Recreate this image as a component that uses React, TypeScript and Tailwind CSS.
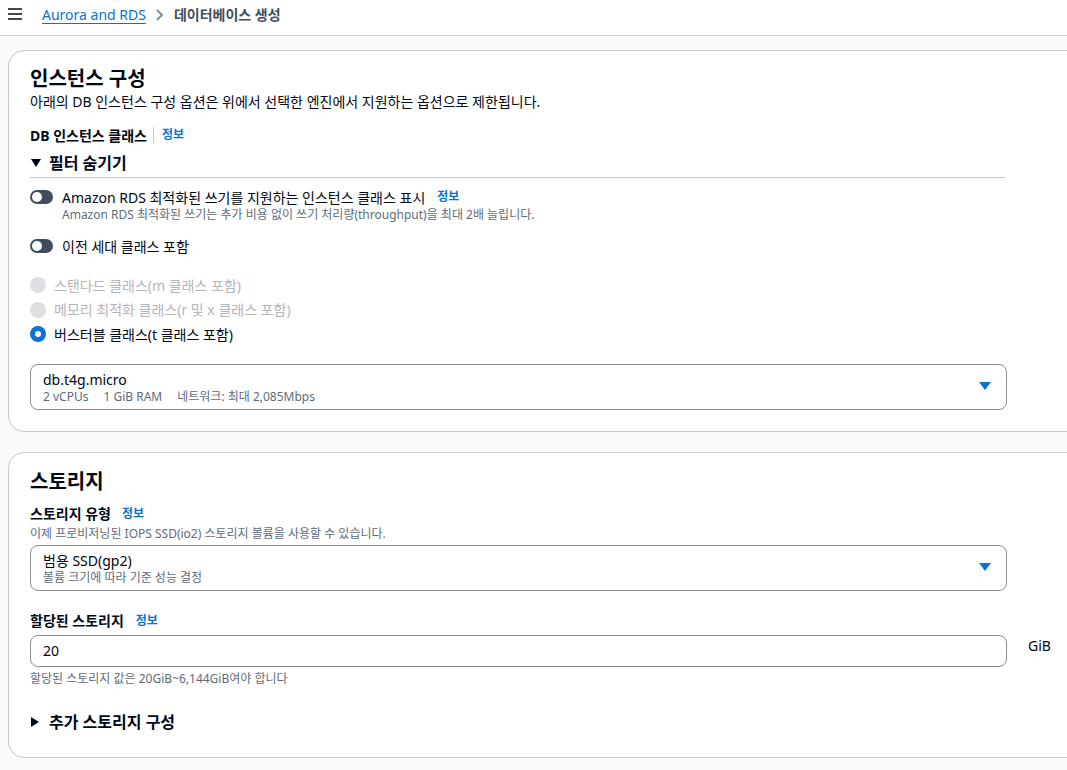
import React from "react";

const font = { fontFamily: '"Noto Sans", "Noto Sans CJK KR", sans-serif' };

const Info = ({ className = "" }: { className?: string }) => (
  <span className={"text-[12px] font-bold text-[#0972d3] " + className}>정보</span>
);

const Toggle = () => (
  <div className="w-[23px] h-[14px] rounded-full bg-[#414d5c] flex items-center px-[2px] shrink-0">
    <div className="w-[10px] h-[10px] rounded-full bg-white"></div>
  </div>
);

const Radio = ({ label, checked, disabled }: { label: string; checked?: boolean; disabled?: boolean }) => (
  <div className="flex items-center gap-[8px] h-[24.5px]">
    {checked ? (
      <div className="w-[16px] h-[16px] rounded-full bg-[#0972d3] flex items-center justify-center shrink-0">
        <div className="w-[6px] h-[6px] rounded-full bg-white"></div>
      </div>
    ) : (
      <div className="w-[16px] h-[16px] rounded-full bg-[#dedee3] shrink-0"></div>
    )}
    <span className={"text-[14px] " + (disabled ? "text-[#b4b4bb]" : "text-[#000716]")}>{label}</span>
  </div>
);

const Caret = () => (
  <svg width="12" height="9" viewBox="0 0 12 9" className="shrink-0">
    <path d="M0 0 H12 L6 8 Z" fill="#0972d3" />
  </svg>
);

const SelectBox = ({ title, sub }: { title: string; sub: React.ReactNode }) => (
  <div className="w-[977px] h-[46px] rounded-[8px] border border-[#8c8c94] bg-white flex items-center justify-between pl-[12px] pr-[15px]">
    <div className="flex flex-col leading-none mt-[3px]">
      <span className="text-[14px] text-[#000716] leading-[18px]">{title}</span>
      <span className="text-[12px] text-[#5f6b7a] leading-[16px]">{sub}</span>
    </div>
    <Caret />
  </div>
);

export default function App() {
  return (
    <div className="min-h-[770px] bg-[#fafafa] overflow-hidden text-[#000716]" style={font}>
      <div className="h-[36px] bg-white border-b border-[#c6c6cd] flex items-start pt-[5px]">
        <svg width="30" height="20" viewBox="0 0 30 20" className="ml-[7px]">
          <rect x="1" y="3" width="14" height="2" fill="#424650" />
          <rect x="1" y="8" width="14" height="2" fill="#424650" />
          <rect x="1" y="13" width="14" height="2" fill="#424650" />
        </svg>
        <span className="ml-[5px] text-[14px] leading-[20px] text-[#0972d3] underline underline-offset-[3px]">Aurora and RDS</span>
        <svg width="12" height="20" viewBox="0 0 12 20" className="ml-[8px]">
          <path d="M3 5 L8 10 L3 15" stroke="#8c8c94" strokeWidth="2" fill="none" />
        </svg>
        <span className="ml-[8px] text-[14px] leading-[20px] font-semibold text-[#414d5c]">데이터베이스 생성</span>
      </div>

      <div className="ml-[8px] mt-[14px] w-[1100px] bg-white border border-[#c6c6cd] rounded-[16px] pl-[21px] pt-[15px] pb-[21px]">
        <h2 className="text-[20px] font-bold leading-[26px]">인스턴스 구성</h2>
        <p className="text-[14px] leading-[20px]">아래의 DB 인스턴스 구성 옵션은 위에서 선택한 엔진에서 지원하는 옵션으로 제한됩니다.</p>
        <div className="flex items-center mt-[14px] h-[18px]">
          <span className="text-[14px] font-bold">DB 인스턴스 클래스</span>
          <span className="w-px h-[16px] bg-[#c6c6cd] ml-[6px] mr-[8px]"></span>
          <Info />
        </div>
        <div className="w-[975px] border-b border-[#c6c6cd] flex items-center h-[27px] mt-[7px] pb-[2px]">
          <svg width="12" height="10" viewBox="0 0 12 10" className="mr-[7px]">
            <path d="M1 1 H11 L6 9 Z" fill="#000716" />
          </svg>
          <span className="text-[16px] font-bold">필터 숨기기</span>
        </div>

        <div className="flex items-start gap-[9px] mt-[9px]">
          <div className="mt-[3px]"><Toggle /></div>
          <div className="flex flex-col">
            <div className="flex items-center h-[20px]">
              <span className="text-[14px]">Amazon RDS 최적화된 쓰기를 지원하는 인스턴스 클래스 표시</span>
              <Info className="ml-[12px]" />
            </div>
            <span className="text-[12px] text-[#5f6b7a] leading-[16px]">Amazon RDS 최적화된 쓰기는 추가 비용 없이 쓰기 처리량(throughput)을 최대 2배 늘립니다.</span>
          </div>
        </div>

        <div className="flex items-center gap-[9px] mt-[13px] h-[20px]">
          <Toggle />
          <span className="text-[14px]">이전 세대 클래스 포함</span>
        </div>

        <div className="flex flex-col mt-[17px]">
          <Radio label="스탠다드 클래스(m 클래스 포함)" disabled />
          <Radio label="메모리 최적화 클래스(r 및 x 클래스 포함)" disabled />
          <Radio label="버스터블 클래스(t 클래스 포함)" checked />
        </div>

        <div className="mt-[17px]">
          <SelectBox
            title="db.t4g.micro"
            sub={
              <span className="flex gap-[15px]">
                <span>2 vCPUs</span>
                <span>1 GiB RAM</span>
                <span>네트워크: 최대 2,085Mbps</span>
              </span>
            }
          />
        </div>
      </div>

      <div className="ml-[8px] mt-[20px] w-[1100px] bg-white border border-[#c6c6cd] rounded-[16px] pl-[21px] pt-[16px] pb-[24px]">
        <h2 className="text-[20px] font-bold leading-[26px]">스토리지</h2>
        <div className="flex items-center mt-[10px] h-[18px]">
          <span className="text-[14px] font-bold">스토리지 유형</span>
          <Info className="ml-[11px]" />
        </div>
        <p className="text-[12px] text-[#5f6b7a] leading-[16px] mt-[3px]">이제 프로비저닝된 IOPS SSD(io2) 스토리지 볼륨을 사용할 수 있습니다.</p>
        <div className="mt-[3px]">
          <SelectBox title="범용 SSD(gp2)" sub="볼륨 크기에 따라 기준 성능 결정" />
        </div>

        <div className="flex items-center mt-[21px] h-[18px]">
          <span className="text-[14px] font-bold">할당된 스토리지</span>
          <Info className="ml-[12px]" />
        </div>
        <div className="flex items-center mt-[5px]">
          <div className="w-[977px] h-[32px] rounded-[8px] border border-[#8c8c94] bg-white flex items-center pl-[12px]">
            <span className="text-[14px]">20</span>
          </div>
          <span className="ml-[21px] text-[14px] -mt-[10px]">GiB</span>
        </div>
        <p className="text-[12px] text-[#5f6b7a] leading-[16px] mt-[4px]">할당된 스토리지 값은 20GiB~6,144GiB여야 합니다</p>

        <div className="flex items-center mt-[24px] h-[22px]">
          <svg width="10" height="12" viewBox="0 0 10 12" className="mr-[9px]">
            <path d="M1 1 L9 6 L1 11 Z" fill="#000716" />
          </svg>
          <span className="text-[16px] font-bold">추가 스토리지 구성</span>
        </div>
      </div>
    </div>
  );
}
